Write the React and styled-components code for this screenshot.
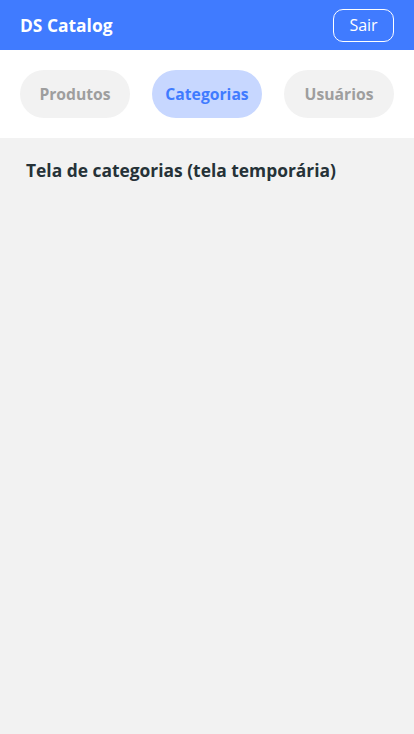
import styled, { createGlobalStyle } from "styled-components";

const GlobalStyle = createGlobalStyle`
  * {
    box-sizing: border-box;
    margin: 0;
    padding: 0;
  }

  body {
    font-family: 'Open Sans', sans-serif;
    background-color: #f2f2f2;
  }
`;

const tabs = [
  { id: 'produtos', label: 'Produtos' },
  { id: 'categorias', label: 'Categorias' },
  { id: 'usuarios', label: 'Usuários' },
];

function App() {
  const current = 'categorias';

  return (
    <Page>
      <GlobalStyle />
      <Header>
        <Logo>DS Catalog</Logo>
        <LogoutButton>Sair</LogoutButton>
      </Header>
      <TabBar>
        {tabs.map(tab => (
          <Tab key={tab.id} active={tab.id === current}>{tab.label}</Tab>
        ))}
      </TabBar>
      <Content>
        <Title>Tela de categorias (tela temporária)</Title>
      </Content>
    </Page>
  );
}

export default App;

const Page = styled.div`
  min-height: 734px;
  display: flex;
  flex-direction: column;
  background-color: #f2f2f2;
`;

const Header = styled.header`
  height: 50px;
  padding: 0 20px;
  display: flex;
  align-items: center;
  justify-content: space-between;
  background-color: #407bff;
`;

const Logo = styled.h1`
  font-size: 17.4px;
  font-weight: 700;
  color: #fff;
`;

const LogoutButton = styled.button`
  width: 61px;
  height: 33px;
  font-family: 'Open Sans', sans-serif;
  font-size: 16px;
  color: #fff;
  background: transparent;
  border: 1px solid #fff;
  border-radius: 10px;
`;

const TabBar = styled.nav`
  height: 88px;
  padding: 0 20px;
  display: flex;
  align-items: center;
  justify-content: space-between;
  background-color: #fff;
`;

const Tab = styled.button`
  width: 110px;
  height: 48px;
  font-family: 'Open Sans', sans-serif;
  font-size: 15.7px;
  font-weight: 700;
  color: ${props => props.active ? '#407bff' : '#9e9e9e'};
  background-color: ${props => props.active ? '#c7d7ff' : '#f2f2f2'};
  border: none;
  border-radius: 24px;
`;

const Content = styled.main`
  padding: 20px 26px;
`;

const Title = styled.h2`
  font-size: 17.4px;
  font-weight: 700;
  color: #263238;
`;
